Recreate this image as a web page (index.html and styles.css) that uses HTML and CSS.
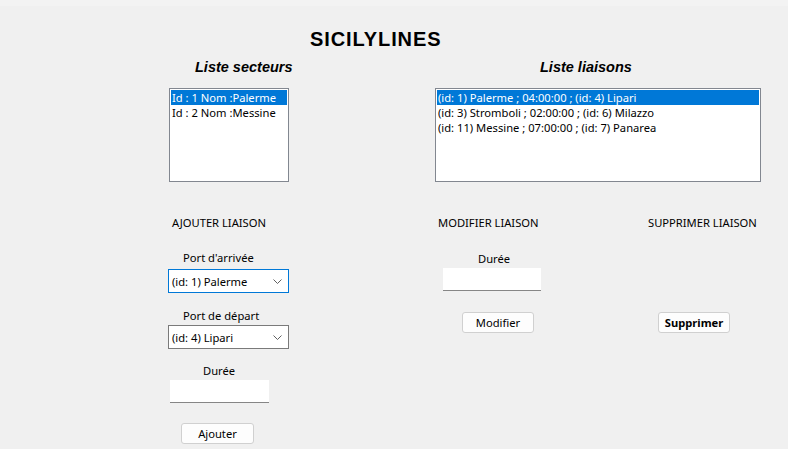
FILE: index.html
```html
<!DOCTYPE html>
<html lang="fr">
<head>
<meta charset="utf-8">
<title>SICILYLINES</title>
<link rel="stylesheet" href="styles.css">
</head>
<body>
<div class="window">
  <div class="titlestrip"></div>
  <h1 class="app-title">SICILYLINES</h1>

  <div class="lists">
    <section class="list-panel secteurs">
      <h2 class="list-title">Liste secteurs</h2>
      <ul class="listbox">
        <li class="selected">Id : 1 Nom :Palerme</li>
        <li>Id : 2 Nom :Messine</li>
      </ul>
    </section>
    <section class="list-panel liaisons">
      <h2 class="list-title">Liste liaisons</h2>
      <ul class="listbox">
        <li class="selected">(id: 1) Palerme ; 04:00:00 ; (id: 4) Lipari</li>
        <li>(id: 3) Stromboli ; 02:00:00 ; (id: 6) Milazzo</li>
        <li>(id: 11) Messine ; 07:00:00 ; (id: 7) Panarea</li>
      </ul>
    </section>
  </div>

  <div class="actions">
    <section class="action add">
      <h3 class="action-title">AJOUTER LIAISON</h3>
      <label class="field-label lbl-arrivee">Port d'arrivée</label>
      <div class="combo focused combo-arrivee">
        <span class="combo-value">(id: 1) Palerme</span>
        <svg class="chevron" width="9" height="5" viewBox="0 0 9 5"><polyline points="0.5,0.5 4.5,4.5 8.5,0.5" fill="none" stroke="#606060" stroke-width="1"/></svg>
      </div>
      <label class="field-label lbl-depart">Port de départ</label>
      <div class="combo combo-depart">
        <span class="combo-value">(id: 4) Lipari</span>
        <svg class="chevron" width="9" height="5" viewBox="0 0 9 5"><polyline points="0.5,0.5 4.5,4.5 8.5,0.5" fill="none" stroke="#606060" stroke-width="1"/></svg>
      </div>
      <label class="field-label lbl-duree-add">Durée</label>
      <div class="textbox tb-add"></div>
      <button class="btn btn-add">Ajouter</button>
    </section>

    <section class="action modify">
      <h3 class="action-title">MODIFIER LIAISON</h3>
      <label class="field-label lbl-duree-mod">Durée</label>
      <div class="textbox tb-mod"></div>
      <button class="btn btn-mod">Modifier</button>
    </section>

    <section class="action delete">
      <h3 class="action-title">SUPPRIMER LIAISON</h3>
      <button class="btn btn-del">Supprimer</button>
    </section>
  </div>
</div>
</body>
</html>
```

FILE: styles.css
```css
* { box-sizing: border-box; }

html, body {
  margin: 0;
  padding: 0;
  background: #f0f0f0;
}

.window {
  width: 788px;
  height: 449px;
  overflow: hidden;
  background: #f0f0f0;
  font-family: "Noto Sans", "Open Sans", sans-serif;
  font-size: 11.2px;
  color: #000;
}

.titlestrip {
  height: 6px;
  background: #f3f3f3;
}

.app-title {
  margin: 22px 0 0 310px;
  font: bold 20px/23px "Liberation Sans", Arial, sans-serif;
  letter-spacing: 0.9px;
}

.lists {
  display: flex;
  margin-top: 8px;
}

.list-panel { display: flex; flex-direction: column; }

.secteurs { margin-left: 169px; width: 120px; }
.liaisons { margin-left: 146px; width: 326px; }

.list-title {
  margin: 0;
  font: italic bold 14.5px/17px "Liberation Sans", Arial, sans-serif;
  white-space: nowrap;
}
.secteurs .list-title { margin-left: 26px; }
.liaisons .list-title { margin-left: 105px; }

.listbox {
  list-style: none;
  margin: 12px 0 0 0;
  padding: 1px;
  height: 94px;
  background: #fff;
  border: 1px solid #828790;
}

.listbox li {
  height: 15px;
  line-height: 15px;
  padding-left: 1px;
  white-space: nowrap;
  overflow: hidden;
}

.listbox li.selected {
  background: #0078d7;
  color: #fff;
}

.actions {
  display: flex;
  align-items: flex-start;
  margin-top: 33px;
}

.action {
  display: flex;
  flex-direction: column;
  align-items: flex-start;
}

.add { margin-left: 168px; width: 122px; }
.modify { margin-left: 148px; width: 120px; }
.delete { margin-left: 90px; width: 120px; }

.action-title {
  margin: 0;
  font-weight: normal;
  font-size: 11.2px;
  line-height: 15px;
  white-space: nowrap;
}
.add .action-title { margin-left: 4px; }

.field-label {
  display: block;
  line-height: 15px;
  white-space: nowrap;
}

.lbl-arrivee { margin: 20px 0 0 15px; }
.lbl-depart { margin: 15px 0 0 15px; }
.lbl-duree-add { margin: 14px 0 0 35px; }
.lbl-duree-mod { margin: 21px 0 0 40px; }

.combo {
  display: flex;
  align-items: center;
  justify-content: space-between;
  width: 121px;
  height: 24px;
  padding: 0 4px 0 3px;
  background: #fff;
  border: 1px solid #7a7a7a;
}
.combo.focused { border-color: #0078d7; }
.combo-arrivee { margin-top: 4px; }
.combo-depart { margin-top: 2px; }
.chevron { display: block; margin-right: 2px; }

.textbox {
  height: 23px;
  background: #fff;
  border-bottom: 1px solid #868686;
}
.tb-add { margin: 2px 0 0 2px; width: 99px; }
.tb-mod { margin: 2px 0 0 5px; width: 98px; }

.btn {
  height: 21px;
  padding: 0;
  background: #fdfdfd;
  border: 1px solid #d0d0d0;
  border-radius: 3px;
  font-family: "Noto Sans", "Open Sans", sans-serif;
  font-size: 11.2px;
  line-height: 18px;
  color: #000;
}
.btn-add { margin: 20px 0 0 13px; width: 73px; }
.btn-mod { margin: 21px 0 0 24px; width: 72px; }
.btn-del { margin: 82px 0 0 10px; width: 72px; font-weight: bold; }
```
